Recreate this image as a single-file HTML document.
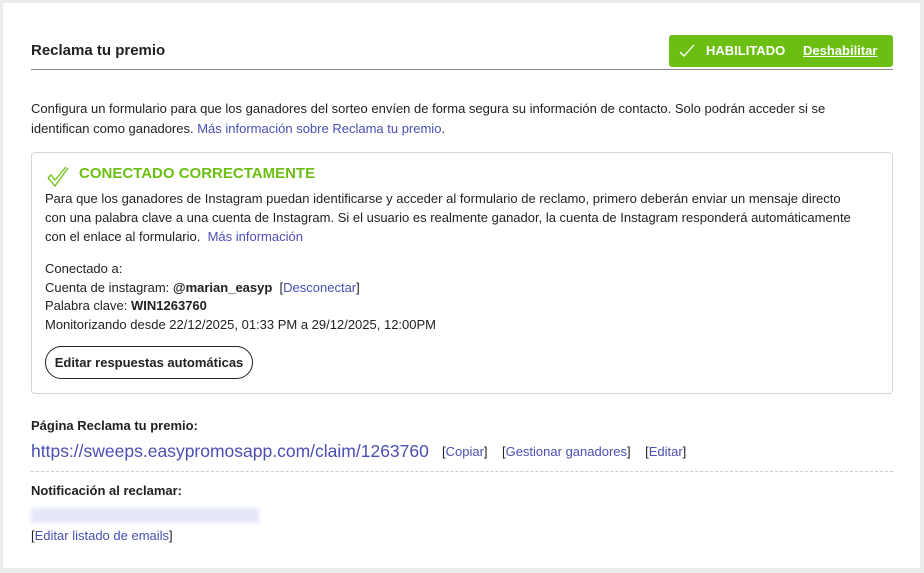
<!DOCTYPE html>
<html><head><meta charset="utf-8"><style>
*{margin:0;padding:0;box-sizing:border-box}
body{width:924px;height:573px;background:#ececec;font-family:"Liberation Sans",sans-serif;color:#222;font-size:13px;position:relative;overflow:hidden}
.card{position:absolute;left:3px;top:3px;width:917px;height:565px;background:#fff}
.a{position:absolute;white-space:nowrap}
a{color:#4a4fb3;text-decoration:none}
.b{font-weight:bold}
</style></head><body>
<div class="card"></div>
<div class="a" style="left:31px;top:42px;font-size:15px;font-weight:bold;color:#222">Reclama tu premio</div>
<div class="a" style="left:31px;top:69px;width:862px;height:1px;background:#888"></div>
<div class="a" style="left:669px;top:35px;width:224px;height:32px;background:#6cbf12;border-radius:3px;color:#fff;font-weight:bold;font-size:13px">
<svg style="position:absolute;left:10px;top:9px" width="16" height="14" viewBox="0 0 16 14"><path d="M1 8 L5 12 L15 1" stroke="#fff" stroke-width="1.3" fill="none"/></svg>
<span style="position:absolute;left:37px;top:8px">HABILITADO</span>
<span style="position:absolute;left:134px;top:8px;text-decoration:underline">Deshabilitar</span></div>
<div class="a" style="left:31px;top:99px;line-height:19.5px">Configura un formulario para que los ganadores del sorteo envíen de forma segura su información de contacto. Solo podrán acceder si se<br>identifican como ganadores. <a>Más información sobre Reclama tu premio</a>.</div>
<div class="a" style="left:31px;top:152px;width:862px;height:242px;border:1px solid #d6d6d6;border-radius:4px"></div>
<svg class="a" style="left:46px;top:166px" width="24" height="22" viewBox="0 0 24 22"><path d="M2 12 L9 20 L22 2 M2 12 L5 9 L9 14 L20 1" stroke="#6cbf12" stroke-width="1.3" fill="none"/></svg>
<div class="a" style="left:79px;top:165px;font-size:15px;font-weight:bold;color:#6cbf12">CONECTADO CORRECTAMENTE</div>
<div class="a" style="left:45px;top:189px;line-height:19px">Para que los ganadores de Instagram puedan identificarse y acceder al formulario de reclamo, primero deberán enviar un mensaje directo<br>con una palabra clave a una cuenta de Instagram. Si el usuario es realmente ganador, la cuenta de Instagram responderá automáticamente<br>con el enlace al formulario.&nbsp; <a>Más información</a></div>
<div class="a" style="left:45px;top:260px;line-height:18.7px">Conectado a:<br>Cuenta de instagram: <b>@marian_easyp</b>&nbsp; [<a>Desconectar</a>]<br>Palabra clave: <b>WIN1263760</b><br>Monitorizando desde 22/12/2025, 01:33 PM a 29/12/2025, 12:00PM</div>
<div class="a" style="left:45px;top:346px;width:208px;height:33px;border:1px solid #222;border-radius:17px;font-weight:bold;text-align:center;line-height:31px">Editar respuestas automáticas</div>
<div class="a b" style="left:31px;top:418px">Página Reclama tu premio:</div>
<div class="a" style="left:31px;top:441px;font-size:17.5px"><a>https://sweeps.easypromosapp.com/claim/1263760</a></div>
<div class="a" style="left:442px;top:444px">[<a>Copiar</a>]&nbsp;&nbsp;&nbsp; [<a>Gestionar ganadores</a>]&nbsp;&nbsp;&nbsp; [<a>Editar</a>]</div>
<div class="a" style="left:31px;top:471px;width:862px;border-top:1px dashed #ccc"></div>
<div class="a b" style="left:31px;top:483px">Notificación al reclamar:</div>
<div class="a" style="left:31px;top:508px;width:228px;height:15px;background:#e4e6fa;filter:blur(2px)"></div>
<div class="a" style="left:31px;top:528px">[<a>Editar listado de emails</a>]</div>
</body></html>
